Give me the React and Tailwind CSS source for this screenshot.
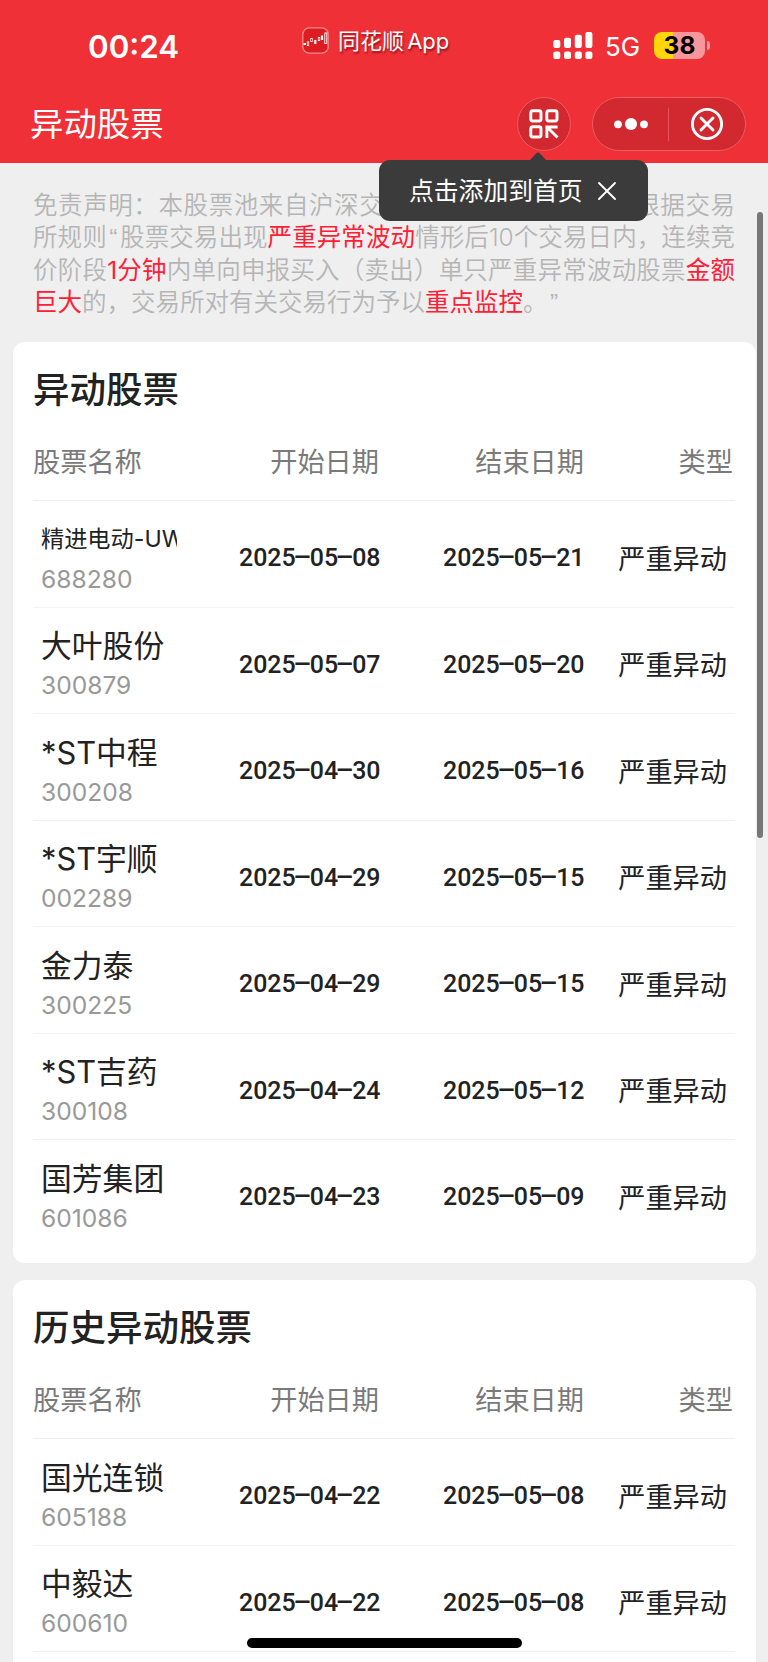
import React from 'react'

const actuales = [
  { nombre: '精进电动-UW', codigo: '688280', inicio: '2025-05-08', fin: '2025-05-21', chico: true },
  { nombre: '大叶股份', codigo: '300879', inicio: '2025-05-07', fin: '2025-05-20' },
  { nombre: '*ST中程', codigo: '300208', inicio: '2025-04-30', fin: '2025-05-16' },
  { nombre: '*ST宇顺', codigo: '002289', inicio: '2025-04-29', fin: '2025-05-15' },
  { nombre: '金力泰', codigo: '300225', inicio: '2025-04-29', fin: '2025-05-15' },
  { nombre: '*ST吉药', codigo: '300108', inicio: '2025-04-24', fin: '2025-05-12' },
  { nombre: '国芳集团', codigo: '601086', inicio: '2025-04-23', fin: '2025-05-09' }
]

const historicas = [
  { nombre: '国光连锁', codigo: '605188', inicio: '2025-04-22', fin: '2025-05-08' },
  { nombre: '中毅达', codigo: '600610', inicio: '2025-04-22', fin: '2025-05-08' }
]

function BarraEstado() {
  return (
    <div className="flex h-[86px] items-start text-white">
      <div className="ml-[88px] mt-[27px] w-[214px] text-[31.3px] leading-[40px] font-semibold">00:24</div>
      <svg className="mt-[27px]" width="27" height="27" viewBox="0 0 27 27">
        <rect x="0.8" y="0.8" width="25.4" height="25.4" rx="6.5" fill="#dc1c20" stroke="#f58a8e" strokeWidth="1.3" />
        <path d="M1.5 17H4M6 14.5V19M9.5 11V15M13.3 13V17M17 10V14M20 8.5V13" stroke="#fff" strokeWidth="2.2" />
        <path d="M6 15.5V18M9.5 12V14M17 11V13" stroke="#dc1c20" strokeWidth="0.9" />
        <rect x="22.8" y="6" width="2" height="10.5" fill="none" stroke="#fff" strokeWidth="0.9" />
      </svg>
      <div className="ml-[9px] mt-[26px] w-[215px] text-[22px] leading-[30px] whitespace-nowrap [text-shadow:1px_2px_2px_rgba(90,0,0,0.6)] [word-spacing:-3px]">
        同花顺 App
      </div>
      <svg className="mt-[32px]" width="40" height="28" viewBox="0 0 40 28" fill="#fff">
        <rect x="0.3" y="8" width="7" height="8" rx="2" />
        <rect x="11" y="5.8" width="7" height="10.2" rx="2" />
        <rect x="21.8" y="2.8" width="7" height="13.2" rx="2" />
        <rect x="32.4" y="0" width="7" height="16" rx="2" />
        <rect x="0.3" y="19.6" width="7" height="7.4" rx="2" />
        <rect x="11" y="19.6" width="7" height="7.4" rx="2" />
        <rect x="21.8" y="19.6" width="7" height="7.4" rx="2" />
        <rect x="32.4" y="19.6" width="7" height="7.4" rx="2" />
      </svg>
      <div className="ml-[12px] mt-[32px] w-[49px] text-[26px] leading-[30px]">5G</div>
      <div className="mt-[32px] flex h-[27px] w-[51px] items-center justify-center rounded-[8px] bg-[linear-gradient(90deg,#ffd60a_38%,#f8979b_38%)] text-[24.5px] leading-[27px] font-bold text-black">
        38
      </div>
      <div className="ml-[2px] mt-[41px] h-[9px] w-[3px] rounded-r-full bg-[#f8979b]"></div>
    </div>
  )
}

function BarraTitulo() {
  return (
    <div className="flex h-[77px] items-start text-white">
      <h1 className="ml-[30px] mt-[14px] w-[487px] text-[33.4px] leading-[48px]">异动股票</h1>
      <div className="relative mt-[11px] flex h-[54px] w-[54px] items-center justify-center rounded-full border border-[#ea5c62] bg-[#d1292f]">
        <svg width="30" height="30" viewBox="0 0 30 30" fill="none" stroke="#fff" strokeWidth="2.9">
          <rect x="1.8" y="1.8" width="10.2" height="10.2" rx="2" />
          <rect x="17.8" y="1.8" width="10.2" height="10.2" rx="2" />
          <rect x="1.8" y="17.8" width="10.2" height="10.2" rx="2" />
          <path d="M17.9 29V18H28.6M18.5 18.5L28.5 28.5" />
        </svg>
        <Aviso />
      </div>
      <div className="ml-[21px] mt-[11px] flex h-[54px] w-[154px] items-center rounded-full border border-[#ea5c62] bg-[#d1292f]">
        <svg className="ml-[20px]" width="36" height="14" viewBox="0 0 36 14" fill="#fff">
          <circle cx="5" cy="7.3" r="3.9" />
          <circle cx="18" cy="7" r="6.1" />
          <circle cx="31" cy="7.3" r="3.9" />
        </svg>
        <div className="ml-[19px] h-[33px] w-px bg-[#e4545a]"></div>
        <svg className="ml-[21px]" width="34" height="34" viewBox="0 0 34 34" fill="none" stroke="#fff" strokeWidth="2.9">
          <circle cx="17" cy="17" r="14.6" />
          <path d="M11 11L23 23M23 11L11 23" strokeLinecap="round" />
        </svg>
      </div>
    </div>
  )
}

function Aviso() {
  return (
    <div className="absolute top-[62px] left-[-139px] z-10 flex h-[61px] w-[269px] items-center rounded-[11px] bg-[#3b3b3b]">
      <svg className="absolute top-[-8px] left-[150px]" width="18" height="9" viewBox="0 0 18 9">
        <path d="M0 9L7.5 1Q9 0 10.5 1L18 9Z" fill="#3b3b3b" />
      </svg>
      <span className="ml-[30px] text-[24.8px] leading-[34px] whitespace-nowrap">点击添加到首页</span>
      <svg className="ml-[14px]" width="20" height="20" viewBox="0 0 20 20" stroke="#fff" strokeWidth="1.9" strokeLinecap="round">
        <path d="M2 2L18 18M18 2L2 18" />
      </svg>
    </div>
  )
}

function Rojo({ children }) {
  return <span className="font-normal text-[#ff2036]">{children}</span>
}

function Comilla({ children }) {
  return <span className="px-[2.5px] font-['Liberation_Sans'] leading-none">{children}</span>
}

function Descargo() {
  return (
    <div className="ml-[33px] w-[702px] pt-[26px] text-[24.5px] leading-[32.3px] font-[350] whitespace-nowrap text-[#b5b5b5] [text-spacing-trim:space-all]">
      <p className="[text-align-last:justify]">免责声明：本股票池来自沪深交易所公开披露的信息，根据交易</p>
      <p className="[text-align-last:justify]">
        所规则<Comilla>“</Comilla>股票交易出现<Rojo>严重异常波动</Rojo>情形后10个交易日内，连续竞
      </p>
      <p className="[text-align-last:justify]">价阶段<Rojo>1分钟</Rojo>内单向申报买入（卖出）单只严重异常波动股票<Rojo>金额</Rojo></p>
      <p>
        <Rojo>巨大</Rojo>的，交易所对有关交易行为予以<Rojo>重点监控</Rojo>。<Comilla>”</Comilla>
      </p>
    </div>
  )
}

function Fecha({ valor, className }) {
  return (
    <div className={`flex justify-end pt-[6px] font-[Roboto] text-[26.5px] font-medium ${className}`}>
      <div className="flex origin-right scale-x-[0.94]">
        {valor.split('-').map((parte, i) => (
          <React.Fragment key={i}>
            {i > 0 && <span className="w-[15px] -translate-y-[1px] scale-x-[2.2] text-center">-</span>}
            <span>{parte}</span>
          </React.Fragment>
        ))}
      </div>
    </div>
  )
}

function Tabla({ titulo, filas, className }) {
  return (
    <section className={`ml-[13px] w-[742.5px] rounded-[12px] bg-white pr-[21px] pl-[20px] text-[#222] ${className}`}>
      <h2 className="pt-[23px] text-[36.5px] leading-[50px] font-medium">{titulo}</h2>
      <div className="flex h-[86px] items-center border-b-[1.5px] border-[#efefef] pt-[11px] text-[27.2px] text-[#7a7a7a]">
        <div className="w-[142px]">股票名称</div>
        <div className="w-[204px] text-right">开始日期</div>
        <div className="w-[205px] text-right">结束日期</div>
        <div className="w-[149px] text-right">类型</div>
      </div>
      {filas.map(fila => (
        <div key={fila.codigo} className="flex h-[106.5px] items-center border-b-[1.5px] border-[#f3f3f3] last:border-transparent">
          <div className="ml-[8px] w-[136px] overflow-hidden pt-[8px] whitespace-nowrap">
            <div className={fila.chico ? 'text-[23.2px] leading-[40px]' : 'text-[30.8px] leading-[42px]'}>{fila.nombre}</div>
            <div className={`text-[24.6px] leading-[36px] text-[#999] ${fila.chico ? 'pt-[2px]' : ''}`}>{fila.codigo}</div>
          </div>
          <Fecha valor={fila.inicio} className="w-[203px]" />
          <Fecha valor={fila.fin} className="w-[204px]" />
          <div className="w-[143px] pt-[12px] text-right text-[27.2px]">严重异动</div>
        </div>
      ))}
    </section>
  )
}

export default function App() {
  return (
    <div className="relative h-[1662px] w-[768px] overflow-hidden bg-[#efefef] font-['Inter','Noto_Sans_CJK_SC',sans-serif]">
      <header className="bg-[#f03037]">
        <BarraEstado />
        <BarraTitulo />
      </header>
      <main>
        <Descargo />
        <Tabla titulo="异动股票" filas={actuales} className="mt-[24px] h-[921px]" />
        {/* la fila siguiente queda fuera de pantalla, solo se ve el separador */}
        <Tabla titulo="历史异动股票" filas={historicas} className="mt-[17px] h-[420px] [&>div:last-child]:border-[#f3f3f3]" />
      </main>
      {/* barra de desplazamiento e indicador de inicio */}
      <div className="absolute top-[212px] left-[757px] h-[626px] w-[6px] rounded-full bg-[#777]"></div>
      <div className="absolute top-[1638px] left-[247px] h-[10px] w-[275px] rounded-full bg-black"></div>
    </div>
  )
}
